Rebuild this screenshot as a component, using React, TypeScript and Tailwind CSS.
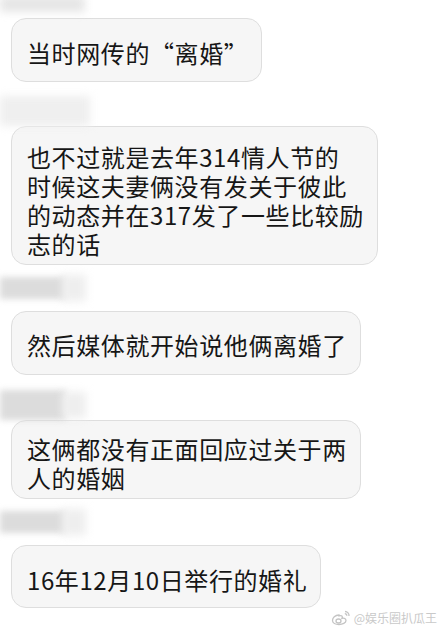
import React from 'react'

const font = { fontFamily: '"Noto Sans CJK SC", "Noto Sans", sans-serif' }

function Blur({ w = 'w-[70px]', h = 'h-[22px]' }: { w?: string; h?: string }) {
  return (
    <div className="flex items-center">
      <div className={`${w} ${h} bg-[#dcdcdc] blur-[3px]`} />
      <div className="w-[24px] h-[26px] -ml-[4px] bg-[#eeeeee] blur-[4px]" />
    </div>
  )
}

function Bubble({ lines, box }: { lines: string[]; box: string }) {
  return (
    <div className={`self-start ml-[11px] rounded-[15px] border border-[#dedede] bg-[#f6f6f6] pl-[15px] pr-[13px] ${box}`}>
      <p className="whitespace-nowrap text-[24px] leading-[29px] tracking-[0.6px] text-[#161616]">
        {lines.map((l, i) => (
          <React.Fragment key={i}>
            {i > 0 && <br />}
            {l}
          </React.Fragment>
        ))}
      </p>
    </div>
  )
}

export default function App() {
  return (
    <div className="w-[440px] h-[626px] bg-white overflow-hidden flex flex-col" style={font}>
      <div className="h-[18px] flex items-start">
        <div className="w-[85px] h-[16px] bg-[#e6e6e6] blur-[4px] -mt-[4px]" />
      </div>
      <Bubble lines={['当时网传的“离婚”']} box="h-[64px] pt-[19px]" />
      <div className="h-[44px] flex items-end">
        <div className="w-[90px] h-[30px] bg-[#efefef] blur-[4px]" />
      </div>
      <Bubble
        lines={['也不过就是去年314情人节的', '时候这夫妻俩没有发关于彼此', '的动态并在317发了一些比较励', '志的话']}
        box="h-[140px] pt-[15px]"
      />
      <div className="h-[46px] flex items-center">
        <Blur w="w-[66px]" h="h-[22px]" />
      </div>
      <Bubble lines={['然后媒体就开始说他俩离婚了']} box="h-[64px] pt-[18px]" />
      <div className="h-[45px] flex items-end">
        <Blur w="w-[66px]" h="h-[30px]" />
      </div>
      <Bubble lines={['这俩都没有正面回应过关于两', '人的婚姻']} box="h-[80px] pt-[13px]" />
      <div className="h-[46px] flex items-center">
        <Blur w="w-[66px]" h="h-[22px]" />
      </div>
      <Bubble lines={['16年12月10日举行的婚礼']} box="h-[63px] pt-[19px]" />
      <div className="flex justify-end items-center gap-[3px] pr-[3px] mt-[2px] text-[#c9c9c9]">
        <svg width="20" height="16" viewBox="0 0 20 16" fill="none" stroke="#c4c4c4" strokeWidth="1.3">
          <path d="M8 5C4 5 1.5 8 1.5 10.5c0 2.5 3 4 6.5 4s7-1.5 7-4C15 8 12 8 11 8.3c.8-2 0-3.2-3-2.3z" />
          <ellipse cx="7.5" cy="11" rx="2.5" ry="2" />
          <path d="M14 1.5a4 4 0 0 1 4 4.5M13.8 3.6a2 2 0 0 1 2 2.2" />
        </svg>
        <span className="text-[12px] leading-[16px]">@娱乐圈扒瓜王</span>
      </div>
    </div>
  )
}
